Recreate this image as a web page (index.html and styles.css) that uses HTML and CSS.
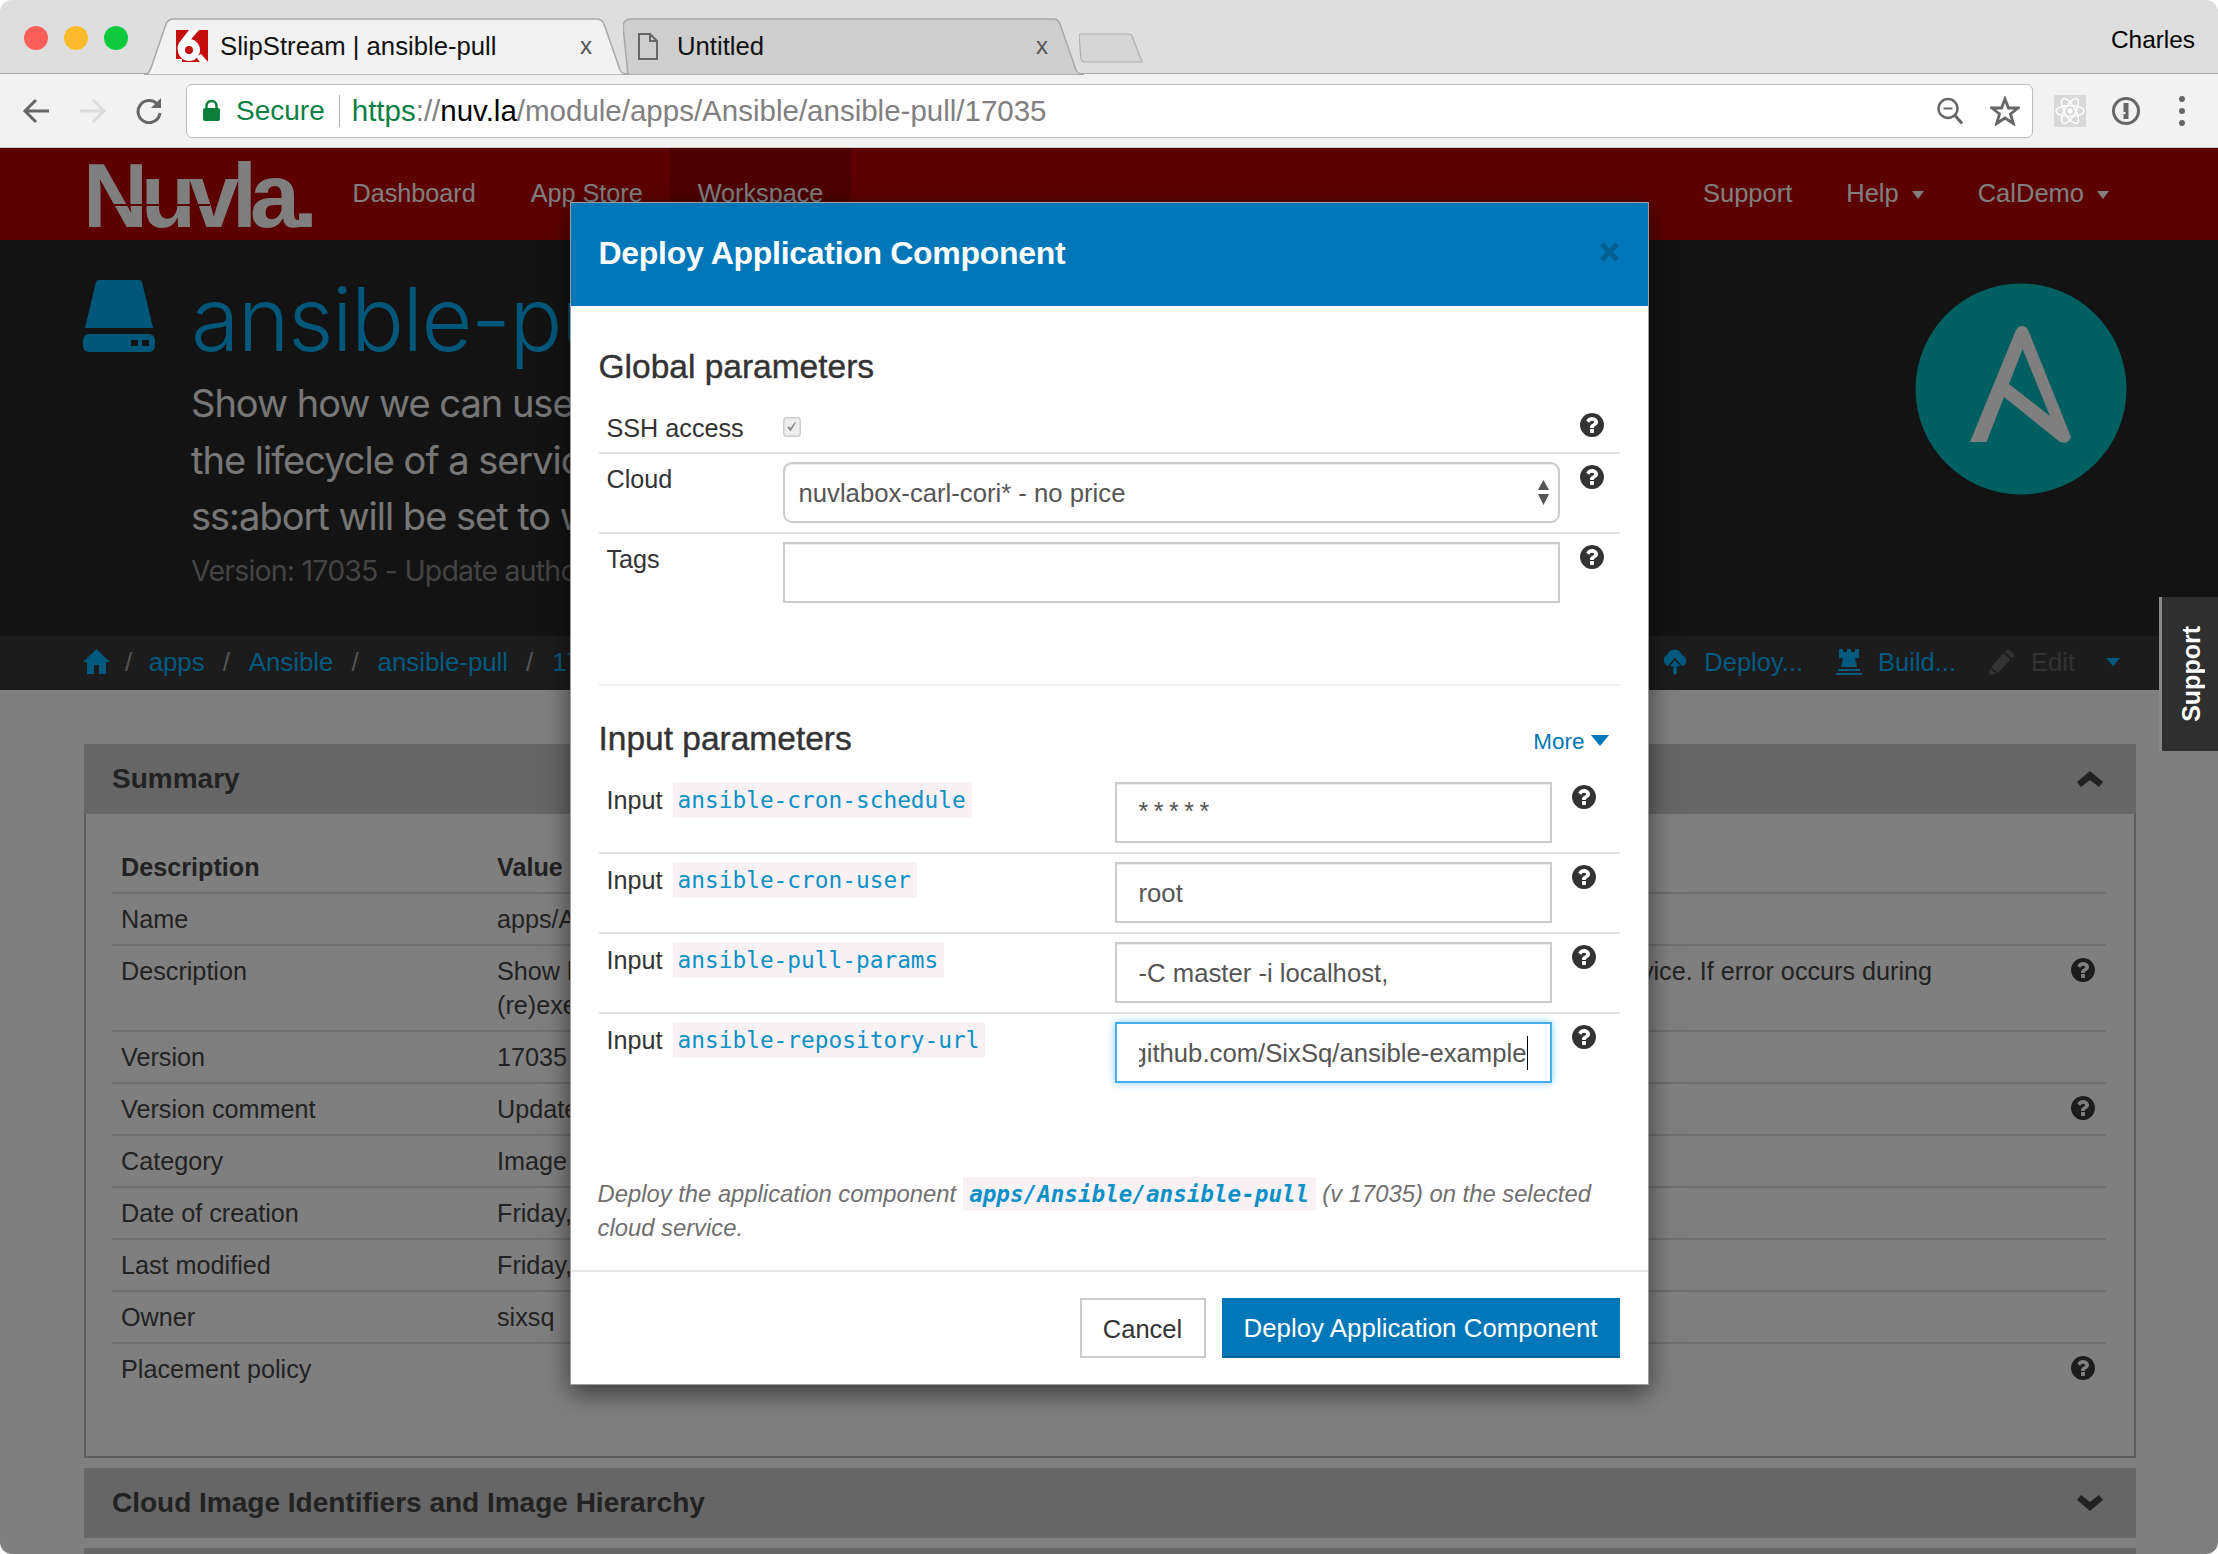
FILE: index.html
```html
<!DOCTYPE html>
<html lang="en">
<head>
<meta charset="utf-8">
<title>SlipStream | ansible-pull</title>
<link rel="stylesheet" href="styles.css">
</head>
<body>
<svg class="defs" width="0" height="0" aria-hidden="true">
  <symbol id="q" viewBox="128 128 1536 1536"><path d="M1024 1376v-192q0-14-9-23t-23-9h-192q-14 0-23 9t-9 23v192q0 14 9 23t23 9h192q14 0 23-9t9-23zm256-672q0-88-55.5-163t-138.5-116-170-41q-243 0-371 213-15 24 8 42l132 100q7 6 19 6 16 0 25-12 53-68 86-92 34-24 86-24 48 0 85.5 26t37.5 59q0 38-20 61t-68 45q-63 28-115.5 86.5t-52.5 125.5v36q0 14 9 23t23 9h192q14 0 23-9t9-23q0-19 21.5-49.5t54.5-49.5q32-18 49-28.5t46-35 44.5-48 28-60.5 12.5-81zm384 192q0 209-103 385.5t-279.5 279.5-385.5 103-385.5-103-279.5-279.5-103-385.5 103-385.5 279.5-279.5 385.5-103 385.5 103 279.5 279.5 103 385.5z"/></symbol>
</svg>
<div class="window">
  <header class="tabstrip">
    <div class="lights"><i class="light red"></i><i class="light amber"></i><i class="light green"></i></div>
    <div class="tab tab-active">
      <svg class="tab-shape" viewBox="0 0 484 57" preserveAspectRatio="none"><path d="M0 57 Q5 56 7 50 L22 6 Q24 1 30 1 H452 Q458 1 460 6 L476 52 Q478 56 484 57 Z" fill="#f2f2f2" stroke="#a8a8a8" stroke-width="1.5"/></svg>
      <svg class="favicon" viewBox="0 0 32 32"><rect width="32" height="32" fill="#c40d0d"/><path d="M13 0H23L11 14 3 24Q0 18 3 13Z" fill="#fff"/><circle cx="13" cy="20" r="11" fill="#fff"/><path d="M20 27 25 24 32 32H24Z" fill="#fff"/><circle cx="13" cy="20" r="4" fill="#c40d0d"/><path d="M0 29h6v3H0z" fill="#fff"/></svg>
      <span class="tab-title">SlipStream | ansible-pull</span>
      <span class="tab-close">x</span>
    </div>
    <div class="tab tab-idle">
      <svg class="tab-shape" viewBox="0 0 461 57" preserveAspectRatio="none"><path d="M5 57 L0 8 Q1 1 8 1 H430 Q435 1 437 6 L453 52 Q455 56 461 57 Z" fill="#cecece" stroke="#a8a8a8" stroke-width="1.5"/></svg>
      <svg class="doc" viewBox="0 0 20 27"><path d="M1 1H12L19 8V26H1Z M12 1V8H19" fill="none" stroke="#666" stroke-width="2"/></svg>
      <span class="tab-title">Untitled</span>
      <span class="tab-close">x</span>
    </div>
    <svg class="newtab" viewBox="0 0 64 30"><path d="M0 3 Q0 1 3 1 H50 Q52 1 53 3 L63 29 H7 Q3 29 2 26 Z" fill="#d6d6d6" stroke="#b0b0b0" stroke-width="1.2"/></svg>
    <span class="profile">Charles</span>
  </header>
  <div class="toolbar">
    <svg class="tool" viewBox="0 0 28 26"><path d="M27 13H4M14 2 3 13l11 11" fill="none" stroke="#666" stroke-width="3"/></svg>
    <svg class="tool" viewBox="0 0 28 26"><path d="M1 13H24M14 2l11 11-11 11" fill="none" stroke="#dcdcdc" stroke-width="3"/></svg>
    <svg class="tool tool-last" viewBox="0 0 28 26"><path d="M22.5 6.500A11 11 0 1 0 25 15" fill="none" stroke="#666" stroke-width="3"/><path d="M26 0V10H16Z" fill="#666"/></svg>
    <div class="omnibox">
      <svg class="lock" viewBox="0 0 17 21"><path d="M3.500 9V6a5 5 0 0 1 10 0v3" fill="none" stroke="#0b7f3a" stroke-width="2.400"/><rect y="8" width="17" height="13" rx="2" fill="#0b7f3a"/></svg>
      <span class="secure">Secure</span>
      <i class="omni-sep"></i>
      <span class="url"><span class="url-scheme">https</span>://<span class="url-host">nuv.la</span>/module/apps/Ansible/ansible-pull/17035</span>
      <svg class="omni-zoom" viewBox="0 0 28 28"><circle cx="12" cy="11.500" r="9.500" fill="none" stroke="#666" stroke-width="2.400"/><path d="M7.500 11.500h9" stroke="#666" stroke-width="2"/><path d="M19 18.500l7 8" stroke="#666" stroke-width="3"/></svg>
      <svg class="omni-star" viewBox="0 0 30 30"><path d="M15 3l3.500 9h9.500l-7.500 6 2.800 9.500L15 22l-8.300 5.500L9.500 18 2 12h9.500z" fill="none" stroke="#666" stroke-width="2.800" stroke-linejoin="miter"/></svg>
    </div>
    <svg class="ext-atom" viewBox="0 0 32 32"><rect width="32" height="32" fill="#d9d9d9"/><g fill="none" stroke="#fff" stroke-width="1.500"><ellipse cx="16" cy="16" rx="14" ry="5.500"/><ellipse cx="16" cy="16" rx="14" ry="5.500" transform="rotate(60 16 16)"/><ellipse cx="16" cy="16" rx="14" ry="5.500" transform="rotate(120 16 16)"/></g><circle cx="16" cy="16" r="2.500" fill="#fff"/></svg>
    <svg class="ext-key" viewBox="0 0 30 30"><circle cx="15" cy="15" r="12.500" fill="none" stroke="#666" stroke-width="3"/><path d="M12.500 7h5v16h-5v-5h2v-2h-2z" fill="#666"/></svg>
    <span class="menu-dots"><i></i><i></i><i></i></span>
  </div>
  <main class="page">
    <nav class="nav">
      <span class="logo">Nuvla.</span>
      <a class="nav-link">Dashboard</a>
      <a class="nav-link">App Store</a>
      <a class="nav-link nav-active">Workspace</a>
      <div class="nav-right">
        <a class="nav-link">Support</a>
        <a class="nav-link">Help <i class="caret"></i></a>
        <a class="nav-link">CalDemo <i class="caret"></i></a>
      </div>
    </nav>
    <section class="hero">
      <svg class="drive" viewBox="0 0 72 72"><path d="M13 2Q13.500 0 16 0H56Q58.500 0 59 2L70 48H2Z" fill="#00aef4"/><rect y="54" width="72" height="18" rx="6" fill="#00aef4"/><path d="M48 60h7v6h-7zM59 60h7v6h-7z" fill="#262626"/></svg>
      <div class="hero-text">
        <h1 class="hero-title">ansible-pull</h1>
        <p class="hero-desc">Show how we can use ansible-pull to manage deployed applications during<br>the lifecycle of a service and report back to the SlipStream server. Parameter<br>ss:abort will be set to w</p>
        <p class="hero-version">Version: 17035 - Update author</p>
      </div>
      <svg class="ansible" viewBox="0 0 212 212"><circle cx="106" cy="106" r="105.500" fill="#00bec0"/><path fill-rule="evenodd" fill="#fff" d="M55 159H71.500L89 114 145 159Q153 162 156 154L114 49Q112 43 107.600 43 103 43 101 47ZM107.600 66 135 133 94 101Z"/></svg>
    </section>
    <div class="crumbs">
      <div class="crumb-list">
        <svg class="home" viewBox="0 0 27 25"><path d="M13.500 0 27 13H23V25H16V16H11V25H4V13H0Z"/></svg>
        <span class="slash">/</span><a>apps</a>
        <span class="slash">/</span><a>Ansible</a>
        <span class="slash">/</span><a>ansible-pull</a>
        <span class="slash">/</span><a>17035</a>
      </div>
      <div class="actions">
        <a class="action"><svg class="act-icon" viewBox="0 0 26 26"><path d="M6 17A6 6 0 0 1 5 6 8 8 0 0 1 20 6 6 6 0 0 1 21 17H6Z"/><path class="act-arrow" d="M13 10l7 8h-4.500v8h-5v-8H6z"/></svg>Deploy...</a>
        <a class="action"><svg class="act-icon" viewBox="0 0 26 26"><path d="M3 0H7V3H11V0H15V3H19V0H23V9H19L21 18H5L7 9H3ZM2 20H24V22H2ZM0 24H26V26H0Z"/></svg>Build...</a>
        <a class="action action-off"><svg class="act-icon" viewBox="0 0 26 26"><path d="M19 0l7 6-3 3-7-6ZM14.500 4.500l7 6L9 24l-7-6ZM1 19.500l6 5L0 26Z"/></svg>Edit</a>
        <i class="action-caret"></i>
      </div>
    </div>
    <div class="content">
      <section class="panel">
        <h2 class="panel-head">Summary<svg class="chev" viewBox="0 0 26 16"><path d="M13 0 26 11l-4 5-9-7-9 7-4-5Z"/></svg></h2>
        <div class="panel-body">
          <table class="info">
            <tr><th class="c1">Description</th><th class="c2">Value</th><th class="c3"></th></tr>
            <tr><td>Name</td><td>apps/Ansible/ansible-pull</td><td></td></tr>
            <tr><td>Description</td><td>Show how we can use ansible-pull to manage deployed applications, during the entire lifecycle of a service. If error occurs during<br>(re)execution ss:abort will be set</td><td><svg class="help"><use href="#q"/></svg></td></tr>
            <tr><td>Version</td><td>17035</td><td></td></tr>
            <tr><td>Version comment</td><td>Update author</td><td><svg class="help"><use href="#q"/></svg></td></tr>
            <tr><td>Category</td><td>Image</td><td></td></tr>
            <tr><td>Date of creation</td><td>Friday, 2 June 2017</td><td></td></tr>
            <tr><td>Last modified</td><td>Friday, 2 June 2017</td><td></td></tr>
            <tr><td>Owner</td><td>sixsq</td><td></td></tr>
            <tr><td>Placement policy</td><td></td><td><svg class="help help-low"><use href="#q"/></svg></td></tr>
          </table>
        </div>
      </section>
      <section class="panel panel-closed">
        <h2 class="panel-head">Cloud Image Identifiers and Image Hierarchy<svg class="chev" viewBox="0 0 26 16"><path d="M13 16 26 5 22 0 13 7 4 0 0 5Z"/></svg></h2>
      </section>
      <section class="panel panel-closed"><h2 class="panel-head">Operating System Parameters</h2></section>
    </div>

    <div class="backdrop"></div>

    <aside class="support-tab"><span>Support</span></aside>

    <div class="modal">
      <div class="modal-head">
        <h2 class="modal-title">Deploy Application Component</h2>
        <svg class="modal-x" viewBox="0 0 21 20"><path d="M3 2 18 18M18 2 3 18" fill="none" stroke="#005f93" stroke-width="5"/></svg>
      </div>
      <div class="modal-body">
        <h3 class="section-title">Global parameters</h3>
        <div class="row row-global row-ssh">
          <span class="label">SSH access</span>
          <div class="field"><svg class="checkbox" viewBox="0 0 18 20"><rect x=".75" y=".75" width="16.500" height="18.500" rx="3" fill="#eee" stroke="#ccc" stroke-width="1.500"/><path d="M4.500 10.500l3 4 5.500-9-1-.5-4.500 6-1.500-1.800z" fill="#8a8a8a"/></svg></div>
          <svg class="help help-modal"><use href="#q"/></svg>
        </div>
        <div class="row row-global">
          <span class="label">Cloud</span>
          <div class="field"><div class="select"><span>nuvlabox-carl-cori* - no price</span><svg class="spinner" viewBox="0 0 11 25"><path d="M5.500 0 11 10H0ZM0 14H11L5.500 25Z"/></svg></div></div>
          <svg class="help help-modal"><use href="#q"/></svg>
        </div>
        <div class="row row-global row-last">
          <span class="label">Tags</span>
          <div class="field"><div class="input"></div></div>
          <svg class="help help-modal"><use href="#q"/></svg>
        </div>
        <div class="section-sep"></div>
        <div class="section-head">
          <h3 class="section-title section-title-flat">Input parameters</h3>
          <a class="more">More <i class="more-caret"></i></a>
        </div>
        <div class="row row-input">
          <span class="label label-code">Input <code>ansible-cron-schedule</code></span>
          <div class="field"><div class="input input-secret">*****</div></div>
          <svg class="help help-modal"><use href="#q"/></svg>
        </div>
        <div class="row row-input">
          <span class="label label-code">Input <code>ansible-cron-user</code></span>
          <div class="field"><div class="input">root</div></div>
          <svg class="help help-modal"><use href="#q"/></svg>
        </div>
        <div class="row row-input">
          <span class="label label-code">Input <code>ansible-pull-params</code></span>
          <div class="field"><div class="input">-C master -i localhost,</div></div>
          <svg class="help help-modal"><use href="#q"/></svg>
        </div>
        <div class="row row-input row-last">
          <span class="label label-code">Input <code>ansible-repository-url</code></span>
          <div class="field"><div class="input input-focus"><div class="scroller"><span class="caret-text">https://github.com/SixSq/ansible-example</span></div></div></div>
          <svg class="help help-modal"><use href="#q"/></svg>
        </div>
        <p class="deploy-note">Deploy the application component <code>apps/Ansible/ansible-pull</code> (v 17035) on the selected cloud service.</p>
      </div>
      <div class="modal-foot">
        <a class="btn btn-plain">Cancel</a>
        <a class="btn btn-primary">Deploy Application Component</a>
      </div>
    </div>
  </main>
</div>
</body>
</html>
```

FILE: styles.css
```css
* { box-sizing: border-box; }
html, body { margin: 0; padding: 0; background: #fff; }
body { width: 2218px; height: 1554px; overflow: hidden; font-family: "Liberation Sans", Arial, sans-serif; font-size: 25.200px; line-height: 34px; color: #444; }
.defs { position: absolute; }
.window { width: 2218px; height: 1554px; border-radius: 12px; overflow: hidden; display: flex; flex-direction: column; }
h1, h2, h3, p { margin: 0; font-weight: normal; }
a { color: inherit; text-decoration: none; }

/* tab strip */
.tabstrip { height: 74px; flex: none; display: flex; align-items: flex-end; background: #dedede; border-bottom: 1.500px solid #a5a5a5; position: relative; }
.lights { display: flex; gap: 16px; padding-left: 24px; align-self: flex-start; margin-top: 26px; }
.light { width: 24px; height: 24px; border-radius: 50%; display: block; }
.red { background: #fc5f5a; }
.amber { background: #fdbb2c; }
.green { background: #0ecb3e; }
.tab { position: relative; height: 57px; display: flex; align-items: center; margin-bottom: -1.500px; font-size: 25.700px; color: #111; }
.tab-shape { position: absolute; left: 0; top: 0; width: 100%; height: 100%; }
.tab > :not(.tab-shape) { position: relative; }
.tab-active { width: 484px; margin-left: 16px; padding-left: 32px; z-index: 2; }
.tab-idle { width: 461px; margin-left: -5px; padding-left: 15px; z-index: 1; }
.favicon { width: 32px; height: 32px; flex: none; margin-right: 12px; }
.doc { width: 20px; height: 27px; flex: none; margin-right: 19px; }
.tab-close { margin-left: auto; font-size: 24px; color: #555; }
.tab-active .tab-close { margin-right: 36px; }
.tab-idle .tab-close { margin-right: 36px; }
.newtab { width: 64px; height: 30px; flex: none; margin: 0 0 10px -5px; }
.profile { margin-left: auto; align-self: flex-start; margin-top: 23px; padding-right: 23px; color: #000; font-size: 24.400px; }

/* toolbar */
.toolbar { height: 74px; flex: none; display: flex; align-items: center; background: #f2f2f2; border-bottom: 1.500px solid #c8c8c8; padding-left: 22px; }
.tool { width: 28px; height: 26px; flex: none; margin-right: 28.500px; }
.tool-last { margin-right: 23px; }
.omnibox { width: 1847px; height: 54px; flex: none; display: flex; align-items: center; background: #fff; border: 1.500px solid #bcbcbc; border-radius: 6px; padding: 0 12px 0 16px; font-size: 28px; }
.lock { width: 17px; height: 21px; flex: none; }
.secure { color: #0b8043; margin-left: 16px; }
.omni-sep { width: 1px; height: 32px; background: #aaa; margin: 0 12px 0 14px; }
.url { color: #808080; white-space: nowrap; font-size: 29.500px; }
.url-scheme { color: #0b8043; }
.url-host { color: #000; }
.omni-zoom { width: 28px; height: 28px; margin-left: auto; }
.omni-star { width: 30px; height: 30px; margin-left: 26px; }
.ext-atom { width: 32px; height: 32px; margin-left: 21px; flex: none; }
.ext-key { width: 30px; height: 30px; margin-left: 25px; flex: none; }
.menu-dots { display: flex; flex-direction: column; gap: 6px; margin-left: 38px; }
.menu-dots i { width: 6px; height: 6px; border-radius: 50%; background: #666; display: block; }

/* page behind the dialog */
.page { position: relative; flex: 1; min-height: 0; overflow: hidden; background: #fff; }
.nav { height: 92px; display: flex; align-items: center; background: #b80000; color: #fff; font-size: 25.200px; }
.logo { width: 238px; margin-left: 87px; font-size: 90px; font-weight: bold; letter-spacing: -7px; line-height: 92px; margin-top: 4px; flex: none; color: #fff; position: relative; left: -4px; }
.logo::after { content: ""; position: absolute; left: 22px; top: 54px; width: 105px; height: 1.500px; background: #b80000; }
.nav-link { padding: 0 27.500px; height: 92px; display: flex; align-items: center; gap: 8px; margin-top: -2px; }
.nav-active { background: #9c0000; margin-top: 0; padding-bottom: 2px; }
.nav-right { margin-left: auto; display: flex; margin-right: 82px; font-size: 25.500px; }
.nav-right .nav-link { padding: 0 27px; }
.caret { width: 0; height: 0; border-left: 6.500px solid transparent; border-right: 6.500px solid transparent; border-top: 8px solid #fff; margin-left: 5px; margin-top: 3px; }
.hero { height: 396px; display: flex; align-items: flex-start; background: #262626; padding: 40px 91px 0 83px; }
.drive { width: 72px; height: 72px; flex: none; }
.hero-text { margin-left: 36px; width: 1300px; white-space: nowrap; flex: none; font-family: Inter, Roboto, "Liberation Sans", sans-serif; font-weight: 300; }
.hero-title { font-size: 88px; line-height: 90px; color: #00aef4; font-weight: 300; margin-top: -6px; letter-spacing: -1.500px; }
.hero-desc { font-size: 38px; line-height: 56.500px; color: #eee; margin-top: 11px; letter-spacing: -1px; }
.hero-version { font-size: 28.500px; line-height: 40px; color: #888; margin-top: 6px; letter-spacing: -.8px; }
.ansible { width: 212px; height: 212px; margin-left: auto; margin-top: 3px; flex: none; }
.crumbs { height: 54px; display: flex; align-items: center; justify-content: space-between; background: #383838; padding: 0 98px 2px 83px; color: #00b4fe; font-size: 25.800px; line-height: 32px; }
.crumb-list { display: flex; align-items: center; }
.home { width: 27px; height: 25px; fill: #00b4fe; margin-top: -1px; }
.slash { color: #aaa; margin: 0 19px 0 18px; }
.crumb-list .home + .slash { margin-left: 15px; margin-right: 16.500px; }
.actions { display: flex; align-items: center; font-size: 25.500px; }
.action { display: flex; align-items: center; gap: 16px; margin-right: 33px; }
.act-icon { width: 26px; height: 26px; fill: #00b4fe; }
.act-arrow { stroke: #383838; stroke-width: 1.500px; }
.action-off { color: #666; }
.action-off .act-icon { fill: #666; }
.action-caret { width: 0; height: 0; border-left: 7px solid transparent; border-right: 7px solid transparent; border-top: 8px solid #00b4fe; margin-left: -2px; }

.content { padding: 54px 82px 0 84px; }
.panel { margin-bottom: 10px; }
.panel-head { height: 70px; display: flex; align-items: center; justify-content: space-between; padding: 0 33px 0 28px; background: #ccc; font-size: 28px; font-weight: bold; color: #444; line-height: 34px; }
.chev { width: 26px; height: 16px; fill: #444; }
.panel-body { border: 2px solid #bbb; border-top: 0; padding: 28px 28px 62px 26px; }
.info { width: 100%; border-collapse: collapse; table-layout: fixed; }
.info th, .info td { padding: 8px 9px; border-bottom: 2px solid #ddd; text-align: left; vertical-align: top; color: #444; line-height: 34px; }
.info tr:last-child td { border-bottom: 0; }
.c1 { width: 376px; }
.c3 { width: 60px; }
.info td:last-child { text-align: right; padding-right: 11px; }
.help { width: 24px; height: 24px; fill: #383838; display: block; margin: 4px 0 0 auto; }
.help-low { margin-top: 4px; }

/* overlay layers */
.backdrop { position: absolute; left: 0; top: 0; right: 0; bottom: 0; background: rgba(0, 0, 0, .5); }
.support-tab { position: absolute; right: 0; top: 449px; width: 59px; height: 154px; display: flex; align-items: center; justify-content: center; background: #2f2f2f; border-left: 3px solid #888; color: #fff; font-weight: bold; font-size: 25px; padding-left: 2px; }
.support-tab span { writing-mode: vertical-rl; transform: rotate(180deg); }
.modal { position: absolute; left: 570px; top: 54px; width: 1079px; background: #fff; border: 1.500px solid #9e9e9e; box-shadow: 0 8px 24px rgba(0, 0, 0, .55); color: #333; }
.modal-head { height: 103px; display: flex; align-items: center; justify-content: space-between; padding: 0 28px 0 27.500px; background: #0077b8; margin: 0; }
.modal-title { font-size: 32px; font-weight: bold; color: #fff; letter-spacing: -.3px; margin-top: -4px; }
.modal-x { width: 21px; height: 20px; margin-top: -6px; }
.modal-body { padding: 41px 28.500px 0 27.500px; }
.section-title { font-size: 33.500px; line-height: 40px; color: #333; margin-bottom: 16px; -webkit-text-stroke: .4px #333; }
.section-title-flat { margin-bottom: 0; }
.row { display: grid; padding: 8px 0 9px; border-bottom: 2px solid #e2e2e2; align-items: start; }
.row-global { grid-template-columns: 184px 777px 24px; column-gap: 0; }
.row-input { grid-template-columns: 516px 437px 24px; }
.row-ssh { padding-bottom: 7px; }
.row-last { border-bottom: 0; }
.help-modal { margin: 3px 0 0 20px; fill: #333; }
.row-ssh .help-modal { margin-top: 2px; }
.row-global .help-modal { grid-column: 3; }
.label { padding-left: 8px; color: #333; white-space: nowrap; }
.label-code { display: flex; align-items: center; gap: 10px; color: #333; }
code { font-family: "DejaVu Sans Mono", "Liberation Mono", monospace; font-size: 22.800px; background: #f9f2f4; color: #0b90c8; line-height: 36px; padding: 0 6px 0 5px; display: inline-block; }
.checkbox { width: 18px; height: 20px; display: block; margin-top: 6px; }
.select { height: 61px; border: 2px solid #ccc; border-radius: 9px; display: flex; align-items: center; justify-content: space-between; padding: 0 9px 0 14px; box-shadow: inset 0 1px 1px rgba(0, 0, 0, .08); color: #555; font-size: 25.700px; }
.spinner { width: 11px; height: 25px; fill: #555; }
.input { height: 61px; border: 2px solid #ccc; box-shadow: inset 0 1px 1px rgba(0, 0, 0, .08); display: flex; align-items: center; padding: 0 22px; color: #555; white-space: nowrap; font-size: 25.700px; }
.row-global .input { padding: 0 14px; }
.input-secret { letter-spacing: 5.500px; align-items: flex-start; padding-top: 10px; font-size: 25px; }
.input-focus { border-color: #43aeea; box-shadow: 0 0 8px rgba(67, 174, 234, .6); padding-right: 22px; }
.scroller { flex: 1; overflow: hidden; display: flex; justify-content: flex-end; }
.caret-text { border-right: 1.500px solid #000; flex: none; line-height: 34px; }
.section-sep { margin-top: 72px; height: 2px; background: #eee; }
.section-head { display: flex; align-items: center; justify-content: space-between; padding: 33px 11px 0 0; margin-bottom: 15px; }
.more { display: flex; align-items: center; gap: 6px; color: #0077b8; font-size: 22.500px; margin-top: 6px; }
.more-caret { width: 0; height: 0; border-left: 9.500px solid transparent; border-right: 9.500px solid transparent; border-top: 11px solid #0077b8; margin-top: -3px; }
.deploy-note { margin: 85px 0 0 -1px; font-style: italic; font-size: 23.800px; line-height: 34px; color: #6f6f6f; }
.deploy-note code { font-size: 22.600px; line-height: 34px; font-weight: bold; font-style: italic; padding: 0 6.500px; }
.modal-foot { margin-top: 25px; border-top: 2px solid #e6e6e6; padding: 26px 28.500px 26px; display: flex; justify-content: flex-end; gap: 16px; }
.btn { height: 60px; display: flex; align-items: center; justify-content: center; font-size: 25.500px; padding-top: 2px; }
.btn-plain { width: 126px; border: 2px solid #ccc; color: #333; }
.btn-primary { width: 398px; background: #0077b8; border-bottom: 2px solid #00669f; color: #fff; font-size: 25.900px; }
```
